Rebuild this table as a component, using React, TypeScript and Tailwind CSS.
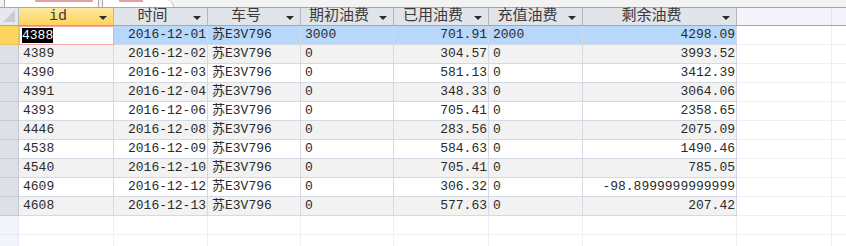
import React from "react";

type Row = [string, string, string, string, string, string, string];

const ROWS: Row[] = [
  ["4388", "2016-12-01", "苏E3V796", "3000", "701.91", "2000", "4298.09"],
  ["4389", "2016-12-02", "苏E3V796", "0", "304.57", "0", "3993.52"],
  ["4390", "2016-12-03", "苏E3V796", "0", "581.13", "0", "3412.39"],
  ["4391", "2016-12-04", "苏E3V796", "0", "348.33", "0", "3064.06"],
  ["4393", "2016-12-06", "苏E3V796", "0", "705.41", "0", "2358.65"],
  ["4446", "2016-12-08", "苏E3V796", "0", "283.56", "0", "2075.09"],
  ["4538", "2016-12-09", "苏E3V796", "0", "584.63", "0", "1490.46"],
  ["4540", "2016-12-10", "苏E3V796", "0", "705.41", "0", "785.05"],
  ["4609", "2016-12-12", "苏E3V796", "0", "306.32", "0", "-98.8999999999999"],
  ["4608", "2016-12-13", "苏E3V796", "0", "577.63", "0", "207.42"],
];

const COLS = [
  { label: "id", w: "w-[95px]", right: false },
  { label: "时间", w: "w-[94px]", right: true },
  { label: "车号", w: "w-[93px]", right: false },
  { label: "期初油费", w: "w-[93px]", right: false },
  { label: "已用油费", w: "w-[95px]", right: true },
  { label: "充值油费", w: "w-[94px]", right: false },
  { label: "剩余油费", w: "w-[154px]", right: true },
];

const FONT = "font-['Liberation_Mono','Noto_Sans_CJK_SC',monospace]";

function Arrow() {
  return (
    <span className="absolute right-[6px] top-[8px] flex flex-col items-center">
      <span className="h-0 w-0 border-x-[4px] border-t-[4px] border-x-transparent border-t-[#2b2b2b]" />
    </span>
  );
}

function Tabs() {
  return (
    <div className="flex h-[7px] items-end bg-[#f3f3f3]">
      <div className="ml-[4px] h-[7px] w-[95px] border-x border-[#a7a7a7] bg-white px-[8px]">
        <div className="ml-[22px] h-[2px] w-[58px] bg-[#e3a2a2]" />
      </div>
      <div className="ml-[3px] h-[7px] w-[62px] border-l border-[#a7a7a7] bg-white">
        <div className="ml-[16px] h-[2px] w-[24px] bg-[#e3a2a2]" />
      </div>
      <div className="h-[7px] w-[10px] rounded-tr-[10px] border-r border-[#b5b5b5] bg-white" />
    </div>
  );
}

function Header() {
  return (
    <div className="flex h-[19px] border-y border-[#a4a8ae] bg-[#e1e4e9]">
      <div className="relative w-[19px] border-r border-[#b6bac1] bg-[#e6e8ec]">
        <span className="absolute bottom-[3px] right-[3px] h-0 w-0 border-b-[12px] border-l-[12px] border-b-[#c9ccd2] border-l-transparent" />
      </div>
      {COLS.map((c, i) => (
        <div
          key={c.label}
          className={`relative ${c.w} border-r border-[#b3b7be] pr-[16px] text-center text-[15px] leading-[17px] text-[#3a3a3a] ${
            i === 0 ? "bg-gradient-to-b from-[#fde89f] to-[#fdd45a]" : ""
          } ${FONT}`}
        >
          {c.label}
          <Arrow />
        </div>
      ))}
      <div className="w-[95px] border-r border-[#e4e7ef] bg-[#f4f5fb]" />
      <div className="flex-1 bg-[#f4f5fb]" />
    </div>
  );
}

function DataRow({ row, idx }: { row: Row; idx: number }) {
  const selected = idx === 0;
  const bg = selected ? "bg-[#b7d8fb]" : idx % 2 === 1 ? "bg-[#f2f2f2]" : "bg-white";
  return (
    <div className="flex h-[19px]">
      <div
        className={`w-[19px] border-b border-r ${
          selected ? "border-[#e8c45a] bg-[#fdd55e]" : "border-[#c5cad3] bg-[#dde0e6]"
        }`}
      />
      {row.map((v, i) => {
        const col = COLS[i];
        if (selected && i === 0) {
          return (
            <div
              key={i}
              className={`${col.w} border border-[#f3a7ad] bg-white pl-[2px] pt-[1px] text-[13px] leading-[15px] ${FONT}`}
            >
              <span className="bg-black text-white">{v}</span>
            </div>
          );
        }
        return (
          <div
            key={i}
            className={`${col.w} ${bg} overflow-hidden whitespace-nowrap border-b border-r border-[#d3dae6] pl-[4px] pr-[1px] text-[13px] leading-[18px] text-[#2a2a2a] ${
              col.right ? "text-right" : "text-left"
            } ${FONT}`}
          >
            {v}
          </div>
        );
      })}
      <div className="w-[95px] border-b border-r border-[#eef0f6] bg-white" />
      <div className="flex-1 border-b border-[#eef0f6] bg-white" />
    </div>
  );
}

function EmptyRow() {
  return (
    <div className="flex h-[19px]">
      <div className="w-[19px] border-b border-r border-[#e6e8f2] bg-[#f4f4fb]" />
      {COLS.map((c) => (
        <div key={c.label} className={`${c.w} border-b border-r border-[#eef0f6] bg-white`} />
      ))}
      <div className="w-[95px] border-b border-r border-[#eef0f6] bg-white" />
      <div className="flex-1 border-b border-[#eef0f6] bg-white" />
    </div>
  );
}

export default function App() {
  return (
    <div className="h-[246px] w-[846px] overflow-hidden bg-white">
      <Tabs />
      <Header />
      {ROWS.map((r, i) => (
        <DataRow key={r[0]} row={r} idx={i} />
      ))}
      <EmptyRow />
      <EmptyRow />
    </div>
  );
}
